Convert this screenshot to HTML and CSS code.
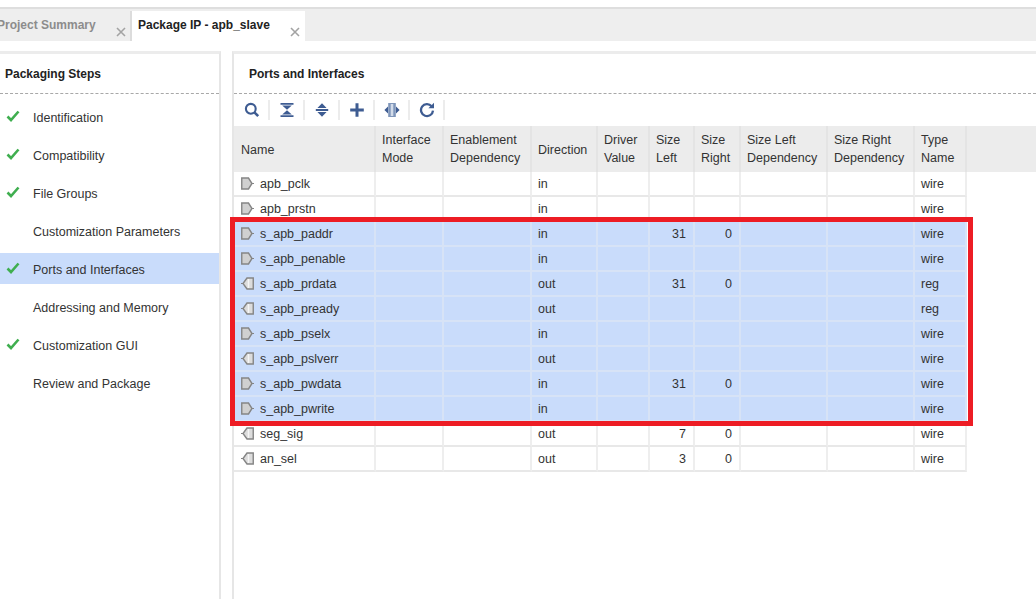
FILE: index.html
```html
<!DOCTYPE html>
<html lang="en">
<head>
<meta charset="utf-8">
<title>Package IP - apb_slave</title>
<link rel="stylesheet" href="styles.css">
</head>
<body>
<svg class="defs" width="0" height="0" aria-hidden="true">
  <symbol id="close" viewBox="0 0 10 10"><path d="M1 1 9 9M9 1 1 9" fill="none" stroke="#a3a3a3" stroke-width="1.6"/></symbol>
  <symbol id="check" viewBox="0 0 14 12"><path d="M1.5 6.5 5 10 12.5 1.5" fill="none" stroke="#3fae4f" stroke-width="2.6"/></symbol>
  <symbol id="in" viewBox="0 0 13 13"><path d="M.75 1H7.5L11 6.5 7.5 12H.75Z" fill="#d0d0d0" stroke="#858585" stroke-width="1.4"/><path d="M11 6.5H13" stroke="#858585"/></symbol>
  <symbol id="out" viewBox="0 0 13 13"><path d="M0 6.5H2" stroke="#858585"/><path d="M12.25 1H6L2 6.5 6 12H12.25Z" fill="#dcdcdc" stroke="#858585" stroke-width="1.4"/><path d="M7.5 2V11" stroke="#f6f6f6" stroke-width="1.4"/></symbol>
</svg>

<div class="top-rule"></div>
<div class="tabbar">
  <div class="tab tab-inactive">
    <span class="tab-label">Project Summary</span>
    <svg class="tab-close"><use href="#close"/></svg>
  </div>
  <div class="tab tab-active">
    <span class="tab-label">Package IP - apb_slave</span>
    <svg class="tab-close"><use href="#close"/></svg>
  </div>
</div>

<div class="workspace">
  <aside class="steps-panel">
    <h2 class="panel-title steps-title">Packaging Steps</h2>
    <ul class="steps">
      <li class="step"><svg class="check"><use href="#check"/></svg><span class="step-label">Identification</span></li>
      <li class="step"><svg class="check"><use href="#check"/></svg><span class="step-label">Compatibility</span></li>
      <li class="step"><svg class="check"><use href="#check"/></svg><span class="step-label">File Groups</span></li>
      <li class="step"><span class="check"></span><span class="step-label">Customization Parameters</span></li>
      <li class="step step-current"><svg class="check"><use href="#check"/></svg><span class="step-label">Ports and Interfaces</span></li>
      <li class="step"><span class="check"></span><span class="step-label">Addressing and Memory</span></li>
      <li class="step"><svg class="check"><use href="#check"/></svg><span class="step-label">Customization GUI</span></li>
      <li class="step"><span class="check"></span><span class="step-label">Review and Package</span></li>
    </ul>
  </aside>

  <section class="ports-panel">
    <h2 class="panel-title ports-title">Ports and Interfaces</h2>
    <div class="toolbar">
      <div class="tool"><svg class="tool-icon" viewBox="0 0 16 16"><circle cx="6.8" cy="6.8" r="4.9" fill="none" stroke="#3e5c92" stroke-width="2.1"/><path d="M10.4 10.4 14.2 14.2" stroke="#3e5c92" stroke-width="2.6"/></svg></div>
      <div class="tool"><svg class="tool-icon" viewBox="0 0 16 16"><path d="M1.5 1h13v1.8h-13ZM3.2 3.6h9.6L8 7.8ZM8 8.2l4.8 4.2H3.2ZM1.5 13.2h13V15h-13Z" fill="#3e5c92"/></svg></div>
      <div class="tool"><svg class="tool-icon" viewBox="0 0 16 16"><path d="M8 1.2 12.6 6H3.4ZM1.8 7.1h12.4v1.8H1.8ZM3.4 10h9.2L8 14.8Z" fill="#3e5c92"/></svg></div>
      <div class="tool"><svg class="tool-icon" viewBox="0 0 16 16"><path d="M8 1.2V14.8M1.2 8H14.8" stroke="#3e5c92" stroke-width="3"/></svg></div>
      <div class="tool"><svg class="tool-icon" viewBox="0 0 16 16"><path d="M.4 8 4 4.6v6.8ZM15.6 8 12 4.6v6.8Z" fill="#3e5c92"/><rect x="4.2" y="1" width="7.6" height="14" fill="#7f96ba"/><path d="M8 2V14" stroke="#d3dcea" stroke-width="2.6"/></svg></div>
      <div class="tool"><svg class="tool-icon" viewBox="0 0 16 16"><path d="M12.6 4.2A6 6 0 1 0 14 8.6" fill="none" stroke="#3e5c92" stroke-width="2.3"/><path d="M9.4 6.2H15V.8Z" fill="#3e5c92"/></svg></div>
    </div>

    <table class="ports">
      <colgroup>
        <col class="c-name"><col class="c-mode"><col class="c-enable"><col class="c-dir"><col class="c-driver"><col class="c-left"><col class="c-right"><col class="c-ldep"><col class="c-rdep"><col class="c-type"><col>
      </colgroup>
      <thead>
        <tr>
          <th class="name-cell solo">Name</th><th>Interface<br>Mode</th><th>Enablement<br>Dependency</th><th class="solo">Direction</th><th>Driver<br>Value</th><th>Size<br>Left</th><th>Size<br>Right</th><th>Size Left<br>Dependency</th><th>Size Right<br>Dependency</th><th>Type<br>Name</th><th class="fill"></th>
        </tr>
      </thead>
      <tbody>
        <tr><td class="name-cell"><svg class="port"><use href="#in"/></svg>apb_pclk</td><td></td><td></td><td>in</td><td></td><td></td><td></td><td></td><td></td><td>wire</td><td class="fill"></td></tr>
        <tr><td class="name-cell"><svg class="port"><use href="#in"/></svg>apb_prstn</td><td></td><td></td><td>in</td><td></td><td></td><td></td><td></td><td></td><td>wire</td><td class="fill"></td></tr>
        <tr class="sel"><td class="name-cell"><svg class="port"><use href="#in"/></svg>s_apb_paddr</td><td></td><td></td><td>in</td><td></td><td class="num">31</td><td class="num">0</td><td></td><td></td><td>wire</td><td class="fill"></td></tr>
        <tr class="sel"><td class="name-cell"><svg class="port"><use href="#in"/></svg>s_apb_penable</td><td></td><td></td><td>in</td><td></td><td></td><td></td><td></td><td></td><td>wire</td><td class="fill"></td></tr>
        <tr class="sel"><td class="name-cell"><svg class="port"><use href="#out"/></svg>s_apb_prdata</td><td></td><td></td><td>out</td><td></td><td class="num">31</td><td class="num">0</td><td></td><td></td><td>reg</td><td class="fill"></td></tr>
        <tr class="sel"><td class="name-cell"><svg class="port"><use href="#out"/></svg>s_apb_pready</td><td></td><td></td><td>out</td><td></td><td></td><td></td><td></td><td></td><td>reg</td><td class="fill"></td></tr>
        <tr class="sel"><td class="name-cell"><svg class="port"><use href="#in"/></svg>s_apb_pselx</td><td></td><td></td><td>in</td><td></td><td></td><td></td><td></td><td></td><td>wire</td><td class="fill"></td></tr>
        <tr class="sel"><td class="name-cell"><svg class="port"><use href="#out"/></svg>s_apb_pslverr</td><td></td><td></td><td>out</td><td></td><td></td><td></td><td></td><td></td><td>wire</td><td class="fill"></td></tr>
        <tr class="sel"><td class="name-cell"><svg class="port"><use href="#in"/></svg>s_apb_pwdata</td><td></td><td></td><td>in</td><td></td><td class="num">31</td><td class="num">0</td><td></td><td></td><td>wire</td><td class="fill"></td></tr>
        <tr class="sel"><td class="name-cell"><svg class="port"><use href="#in"/></svg>s_apb_pwrite</td><td></td><td></td><td>in</td><td></td><td></td><td></td><td></td><td></td><td>wire</td><td class="fill"></td></tr>
        <tr><td class="name-cell"><svg class="port"><use href="#out"/></svg>seg_sig</td><td></td><td></td><td>out</td><td></td><td class="num">7</td><td class="num">0</td><td></td><td></td><td>wire</td><td class="fill"></td></tr>
        <tr><td class="name-cell"><svg class="port"><use href="#out"/></svg>an_sel</td><td></td><td></td><td>out</td><td></td><td class="num">3</td><td class="num">0</td><td></td><td></td><td>wire</td><td class="fill"></td></tr>
      </tbody>
    </table>
    <div class="highlight-box"></div>
  </section>
</div>
</body>
</html>
```

FILE: styles.css
```css
* { box-sizing: border-box; }

html, body {
  margin: 0;
  height: 599px;
  overflow: hidden;
  background: #ffffff;
  color: #333333;
  font: 12.5px/18px "Liberation Sans", Arial, sans-serif;
}

.defs { position: absolute; }

.top-rule {
  height: 10px;
  border-bottom: 2px solid #dedede;
  margin-top: -1px;
}

.tabbar {
  display: flex;
  align-items: flex-end;
  height: 32px;
  background: #eeeeee;
  overflow: hidden;
}

.tab {
  display: flex;
  align-items: flex-start;
  justify-content: space-between;
  height: 30px;
  font-size: 12px;
  font-weight: bold;
}

.tab-inactive {
  width: 135px;
  margin-left: -3px;
  padding: 5px 4px 0 0;
  color: #8c8c8c;
  border-right: 2px solid #dcdcdc;
}

.tab-active {
  width: 173px;
  padding: 5px 5px 0 6px;
  background: #ffffff;
  color: #222222;
}

.tab-close {
  width: 10px;
  height: 10px;
  margin-top: 11px;
}

.workspace {
  display: flex;
  gap: 11px;
  height: 548px;
  margin-top: 10px;
}

.steps-panel {
  flex: 0 0 221px;
  border-top: 3px solid #ececec;
  border-right: 2px solid #e6e6e6;
}

.ports-panel {
  position: relative;
  flex: 1;
  min-width: 0;
  border-top: 3px solid #ececec;
  border-left: 2px solid #e6e6e6;
}

.panel-title {
  height: 40px;
  margin: 0;
  border-bottom: 1px dashed #a8a8a8;
  font-size: 12px;
  font-weight: bold;
  line-height: 40px;
  color: #222222;
}

.steps-title { padding-left: 5px; }
.ports-title { padding-left: 15px; }

.steps {
  display: flex;
  flex-direction: column;
  gap: 7px;
  margin: 0;
  padding: 7px 0 0;
  list-style: none;
}

.step {
  display: flex;
  align-items: center;
  height: 31px;
  padding-left: 6px;
}

.step-label { padding-top: 2px; }

.step-current { background: #c9dcfb; }

.check {
  flex: none;
  width: 14px;
  height: 12px;
  margin: -1px 13px 0 0;
}

.toolbar {
  display: flex;
  align-items: center;
  height: 32px;
  padding-left: 1px;
}

.tool {
  display: flex;
  align-items: center;
  justify-content: center;
  width: 35px;
  height: 20px;
  border-right: 2px solid #ececec;
}

.tool-icon {
  width: 16px;
  height: 16px;
}

.ports {
  width: 802px;
  table-layout: fixed;
  border-collapse: separate;
  border-spacing: 0;
}

.c-name { width: 142px; }
.c-mode { width: 68px; }
.c-enable { width: 88px; }
.c-dir { width: 66px; }
.c-driver { width: 52px; }
.c-left { width: 45px; }
.c-right { width: 46px; }
.c-ldep { width: 87px; }
.c-rdep { width: 87px; }
.c-type { width: 52px; }

.ports th {
  height: 46px;
  padding: 0 0 0 6px;
  background: #ececec;
  border-right: 2px solid #e4e4e4;
  font-weight: normal;
  text-align: left;
  vertical-align: middle;
}

.ports th.solo { padding-top: 2px; }

.ports td {
  height: 25px;
  padding: 1px 0 0 6px;
  border-right: 2px solid #eeeeee;
  border-bottom: 2px solid #e8e8e8;
  line-height: 22px;
  vertical-align: middle;
  white-space: nowrap;
}

.ports .name-cell { padding-left: 7px; }

.ports .fill {
  border-right: 0;
}

.ports td.fill {
  border-bottom: 0;
  background: #ffffff;
}

.ports .num {
  padding: 1px 7px 0 0;
  text-align: right;
}

.sel td {
  background: #c9dcfb;
  border-color: #d7e3f6;
}

.port {
  width: 13px;
  height: 13px;
  margin-right: 6px;
  vertical-align: -2px;
}

.highlight-box {
  position: absolute;
  top: 163px;
  left: -4px;
  width: 743px;
  height: 209px;
  border: 5px solid #ed1c24;
  pointer-events: none;
}
```
